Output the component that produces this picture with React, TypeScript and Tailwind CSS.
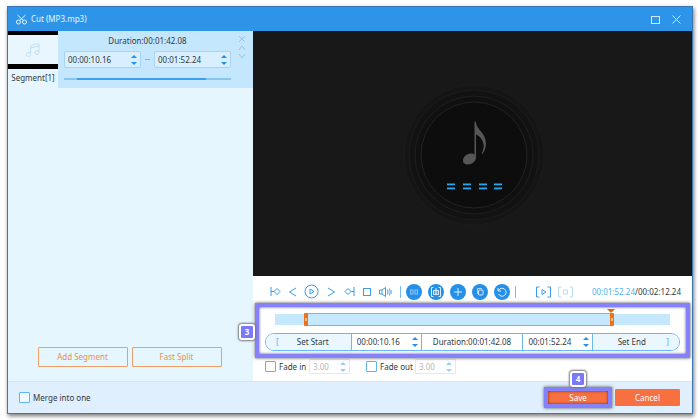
import type { ReactNode } from "react";

const stroke = { fill: "none", stroke: "currentColor", strokeWidth: 1 } as const;

function Icon({ w = 14, h = 14, children }: { w?: number; h?: number; children: ReactNode }) {
  return (
    <svg width={w} height={h} viewBox={`0 0 ${w} ${h}`} {...stroke} aria-hidden="true" className="block shrink-0">
      {children}
    </svg>
  );
}

function Arrows() {
  return (
    <span className="flex w-3 shrink-0 flex-col items-center gap-1">
      <button type="button" aria-label="Increase" className="block">
        <svg width="6" height="3" viewBox="0 0 6 3" className="block fill-current"><path d="M0 3 3 0 6 3z" /></svg>
      </button>
      <button type="button" aria-label="Decrease" className="block">
        <svg width="6" height="3" viewBox="0 0 6 3" className="block fill-current"><path d="M0 0 3 3 6 0z" /></svg>
      </button>
    </span>
  );
}

function Spin({ label, value, className }: { label: string; value: string; className: string }) {
  return (
    <span className={`flex items-center text-[#2490ea] ${className}`}>
      <input aria-label={label} defaultValue={value} className="w-0 min-w-0 flex-1 bg-transparent text-[#34383c] outline-none" />
      <Arrows />
    </span>
  );
}

function Tool({ label, className, children }: { label: string; className: string; children: ReactNode }) {
  return (
    <button type="button" aria-label={label} className={`flex h-5 shrink-0 items-center justify-center ${className}`}>
      {children}
    </button>
  );
}

function RoundTool({ label, children }: { label: string; children: ReactNode }) {
  return (
    <button type="button" aria-label={label} className="flex size-4 shrink-0 items-center justify-center rounded-full bg-[#2590e8] text-[#d6edff]">
      <Icon w={10} h={10}>{children}</Icon>
    </button>
  );
}

function Check({ id, label }: { id: string; label: string }) {
  return (
    <span className="flex items-center gap-[3px]">
      <input id={id} type="checkbox" className="size-[11px] shrink-0 appearance-none rounded-[1px] border border-[#62b2ef] bg-white/50 checked:bg-[#2e94e8]" />
      <label htmlFor={id} className="whitespace-nowrap">{label}</label>
    </span>
  );
}

function Fade({ id, label, className }: { id: string; label: string; className: string }) {
  return (
    <div className="flex items-center">
      <div className={className}><Check id={id} label={label} /></div>
      <span className="flex h-[15px] w-[41px] items-center rounded-[1px] border border-[#d8ecf9] pl-[3px] text-[#9ccdf3]">
        <input aria-label={`${label} seconds`} disabled defaultValue="3.00" className="min-w-0 flex-1 bg-transparent text-[#b4b8bb]" />
        <Arrows />
      </span>
    </div>
  );
}

function Badge({ children }: { children: ReactNode }) {
  return (
    <span className="absolute flex size-4 items-center justify-center rounded-[3px] border-2 border-white bg-[#7b78fb] font-bold text-white shadow-[0_0_2px_1px_#777] group-data-[step=three]:-left-5 group-data-[step=three]:top-[17px] group-data-[step=four]:-top-[20px] group-data-[step=four]:left-[22px]">
      {children}
    </span>
  );
}

const thumb =
  "pointer-events-none absolute inset-x-0 -top-px h-[13px] w-full appearance-none bg-transparent [&::-webkit-slider-thumb]:pointer-events-auto [&::-webkit-slider-thumb]:h-[13px] [&::-webkit-slider-thumb]:w-1 [&::-webkit-slider-thumb]:appearance-none [&::-webkit-slider-thumb]:rounded-[1px] [&::-webkit-slider-thumb]:border-x [&::-webkit-slider-thumb]:border-[#ee7017] [&::-webkit-slider-thumb]:bg-[linear-gradient(#ee7017_5px,#ffc08c_5px,#ffc08c_8px,#ee7017_8px)]";

function TitleBar() {
  return (
    <header className="flex h-6 items-center bg-[#2e94e8] pr-[11px] pl-2 text-[#e8f5ff]">
      <Icon w={11} h={11}>
        <circle cx="2.5" cy="8" r="2" />
        <circle cx="8.5" cy="8" r="2" />
        <path d="M1.5 1 7.3 6.5M9.5 1 3.7 6.5" />
      </Icon>
      <h1 className="flex-1 pl-1">Cut (MP3.mp3)</h1>
      <button type="button" aria-label="Maximize" className="mr-3 text-[#d4ebff]"><Icon w={9} h={9}><rect x=".5" y="1.5" width="8" height="7" /></Icon></button>
      <button type="button" aria-label="Close" className="text-[#d4ebff]"><Icon w={9} h={9}><path d="m.5.5 8 8m0-8-8 8" /></Icon></button>
    </header>
  );
}

function Segments() {
  return (
    <aside className="flex w-[245px] shrink-0 flex-col justify-between bg-[#e6f6fe]">
      <div className="flex h-[57px] bg-[#c4e7fe]">
        <div className="flex w-[50px] flex-col bg-[#e6f5fe] text-center">
          <div className="flex h-[38px] items-center justify-center border-t-4 border-b-[5px] border-black bg-[#eaf6fe] text-[#bfe0f5]">
            <Icon w={16} h={16}>
              <path d="M5.5 12V3.5L14 1.5V10M5.5 6 14 4" />
              <circle cx="3.5" cy="12.5" r="2" />
              <circle cx="12" cy="10.5" r="2" />
            </Icon>
          </div>
          <p className="pt-[3px]">Segment[1]</p>
        </div>
        <div className="flex flex-1 flex-col pl-1.5">
          <p className="mt-1 text-center">Duration:00:01:42.08</p>
          <div className="mt-1 flex h-[17px] items-center justify-between">
            <Spin label="Segment start" value="00:00:10.16" className="h-[17px] w-[77px] rounded-[2px] border border-[#a5d4f5] bg-[#d7effe] pl-[3px]" />
            <span className="h-px w-[5px] bg-[#6bb9f2]" />
            <Spin label="Segment end" value="00:01:52.24" className="h-[17px] w-[77px] rounded-[2px] border border-[#a5d4f5] bg-[#d7effe] pl-[3px]" />
          </div>
          <div className="mt-2.5 flex h-0.5 bg-[#86c6f4]">
            <div className="ml-[8%] w-[77%] bg-[#3c9ff0]" />
          </div>
        </div>
        <div className="flex w-[22px] flex-col items-center gap-0.5 pt-1 text-[#94c6e8]">
          <button type="button" aria-label="Remove segment"><Icon w={8} h={8}><path d="m1 1 6 6m0-6-6 6" /></Icon></button>
          <button type="button" aria-label="Move up"><Icon w={8} h={6}><path d="m1 5 3-4 3 4" /></Icon></button>
          <button type="button" aria-label="Move down"><Icon w={8} h={6}><path d="m1 1 3 4 3-4" /></Icon></button>
        </div>
      </div>
      <div className="flex justify-center gap-1 pr-0.5 pb-3.5 text-[#ee8d48]">
        <button type="button" className="h-5 w-[90px] rounded-[1px] border border-[#ef9f66]">Add Segment</button>
        <button type="button" className="h-5 w-[90px] rounded-[1px] border border-[#ef9f66]">Fast Split</button>
      </div>
    </aside>
  );
}

function Preview() {
  return (
    <div className="flex h-[245px] items-center justify-center bg-[#181818] pt-0.5 pl-0.5">
      <svg width="142" height="142" viewBox="0 0 142 142" role="img" aria-label="Audio preview">
        <circle cx="71" cy="71" r="70" fill="#151515" stroke="#1c1c1c" />
        <circle cx="71" cy="71" r="65" fill="#121212" stroke="#1d1d1d" />
        <circle cx="71" cy="71" r="59" fill="#101010" stroke="#202020" />
        <circle cx="71" cy="71" r="53" fill="#0d0d0d" stroke="#232323" />
        <ellipse cx="66.500" cy="75" rx="7" ry="5" fill="#565656" transform="rotate(-28 66.500 75)" />
        <path d="M71.500 37.500h1.200c.8 9 10.300 11 10.300 22 0 4-1.500 8-3.500 10.500l-.8-.5c2-4 2.800-8 1-12-1.500-3.500-4-6-6.700-7V74h-1.500z" fill="#565656" />
        <g fill="#23a8ef">
          {[44, 60, 76, 91].map((x) => (
            <g key={x}>
              <rect x={x} y="99.500" width="8" height="1.800" />
              <rect x={x} y="103.500" width="8" height="1.800" />
            </g>
          ))}
        </g>
      </svg>
    </div>
  );
}

function Toolbar() {
  return (
    <div className="flex h-[27px] items-center pt-1 pr-[11px] pl-3.5 text-[#3a9ceb]">
      <Tool label="Go to start" className="w-[17px]"><Icon w={11} h={11}><path d="M1 1v9M1 5.500h3M7 2.500l3 3-3 3-3-3z" /></Icon></Tool>
      <Tool label="Previous frame" className="w-[17px]"><Icon w={9} h={10}><path d="M8 1 1.500 5 8 9" /></Icon></Tool>
      <Tool label="Play" className="w-5"><Icon w={15} h={15}><circle cx="7.500" cy="7.500" r="6.500" /><path d="m6 5 4 2.500L6 10z" /></Icon></Tool>
      <Tool label="Next frame" className="w-5"><Icon w={9} h={10}><path d="m1 1 6.500 4L1 9" /></Icon></Tool>
      <Tool label="Go to end" className="w-[17px]"><Icon w={11} h={11}><path d="M10 1v9M10 5.500H7M4 2.500l3 3-3 3-3-3z" /></Icon></Tool>
      <Tool label="Stop" className="w-[17px]"><Icon w={8} h={8}><rect x=".5" y=".5" width="7" height="7" /></Icon></Tool>
      <Tool label="Volume" className="w-5"><Icon w={13} h={12}><path d="M3 4H.5v4H3zM3 4l3.500-2.500v9L3 8M8.500 3.500q1 2.500 0 5M10.500 2.500q1.500 3.500 0 7" /><path d="M12.500 4v4" opacity=".5" /></Icon></Tool>
      <span className="mx-[5px] h-3 w-px bg-[#73bbf2]" />
      <div className="flex gap-1.5">
        <RoundTool label="Split"><g opacity=".6"><rect x="1.500" y="3" width="2.500" height="4" /><rect x="6" y="3" width="2.500" height="4" /></g></RoundTool>
        <RoundTool label="Snap segment"><path d="M2.500.5h-2v9h2M7.500.5h2v9h-2M2.500 3.500h5v4h-5zM4 2h2" /><circle cx="5" cy="5.500" r="1" /></RoundTool>
        <RoundTool label="Add"><path d="M5 1v8M1 5h8" /></RoundTool>
        <RoundTool label="Copy"><path d="M2.500 7V1.500H7" opacity=".7" /><rect x="3.500" y="3" width="4.500" height="5" rx="1" /></RoundTool>
        <RoundTool label="Reset"><path d="M1 1v3h3M1.500 3.500A4 4 0 1 1 1.500 7" /></RoundTool>
      </div>
      <span className="mx-[5px] h-3 w-px bg-[#73bbf2]" />
      <div className="flex flex-1 justify-center gap-[7px] pr-1">
        <Tool label="Play selection" className="w-[15px]"><Icon w={15} h={12}><path d="M3.500 1H.5v10h3M11.500 1h3v10h-3M6 3.500 10 6 6 8.500z" /></Icon></Tool>
        <Tool label="Stop selection" className="w-[15px] text-[#badcf5]"><Icon w={15} h={12}><path d="M3.500 1H.5v10h3M11.500 1h3v10h-3M5.500 4h4v4h-4z" /></Icon></Tool>
      </div>
      <p className="text-[#34383c]"><span className="text-[#55aef2]">00:01:52.24</span>/00:02:12.24</p>
    </div>
  );
}

function Timeline() {
  return (
    <section data-step="three" aria-label="Trim" className="group relative mx-0.5 h-[55px] border-4 border-[#8481fa] bg-white px-1.5 shadow-[0_0_3px_#555,inset_0_0_3px_#555]">
      <Badge>3</Badge>
      <div className="relative mt-[7px] mr-2.5 ml-2.5 flex h-[11px] bg-[#c5e8ff]">
        <div className="-my-px ml-[8%] w-[77%] border-y border-[#f29254]" />
        <svg width="8" height="4" viewBox="0 0 8 4" className="absolute -top-[5px] left-[84%] fill-[#d96a1a]"><path d="M0 0h8L4 4z" /></svg>
        <input type="range" aria-label="Start position" min="0" max="1000" defaultValue="75" className={thumb} />
        <input type="range" aria-label="End position" min="0" max="1000" defaultValue="858" className={thumb} />
      </div>
      <div className="mt-2 grid h-[18px] grid-cols-[minmax(0,86fr)_minmax(0,70fr)_minmax(0,102fr)_minmax(0,70fr)_minmax(0,86fr)] grid-rows-[minmax(0,1fr)] divide-x divide-[#68b8f3] overflow-hidden rounded-full border border-[#68b8f3]">
        <button type="button" className="flex items-center bg-[#eaf7ff] pr-1 pl-2.5">
          <span className="text-[#5baeea]">[</span><span className="flex-1">Set Start</span>
        </button>
        <Spin label="Start time" value="00:00:10.16" className="pl-[5px]" />
        <p className="flex items-center justify-center">Duration:00:01:42.08</p>
        <Spin label="End time" value="00:01:52.24" className="pl-[5px]" />
        <button type="button" className="flex items-center bg-[#eaf7ff] pr-2.5 pl-1">
          <span className="flex-1">Set End</span><span className="text-[#5baeea]">]</span>
        </button>
      </div>
    </section>
  );
}

export default function App() {
  return (
    <div className="bg-white px-[7px] pt-1.5 pb-[7px] font-['Noto_Sans',sans-serif] text-[8px] leading-3 text-[#34383c]">
      <main className="border border-[#3977b8] bg-white shadow-[1px_2px_4px_#777]">
        <TitleBar />
        <div className="flex">
          <Segments />
          <div className="min-w-0 flex-1">
            <Preview />
            <Toolbar />
            <Timeline />
            <div className="flex h-[23px] items-start gap-4 pt-px pl-3">
              <Fade id="fade-in" label="Fade in" className="w-11" />
              <Fade id="fade-out" label="Fade out" className="w-[49px]" />
            </div>
          </div>
        </div>
        <footer className="flex h-8 items-center justify-between border-t border-[#cfe7fa] bg-[#dfeffe] pr-3 pl-[11px]">
          <Check id="merge" label="Merge into one" />
          <div className="flex items-center gap-[3px] text-white">
            <div data-step="four" className="group relative border-4 border-[#8481fa] shadow-[0_0_3px_#555]">
              <button type="button" className="block h-[13px] w-[60px] bg-[#f8703f] shadow-[inset_0_0_3px_#732b10]">Save</button>
              <Badge>4</Badge>
            </div>
            <button type="button" className="h-[17px] w-[65px] rounded-[1px] bg-[#f87040]">Cancel</button>
          </div>
        </footer>
      </main>
    </div>
  );
}
